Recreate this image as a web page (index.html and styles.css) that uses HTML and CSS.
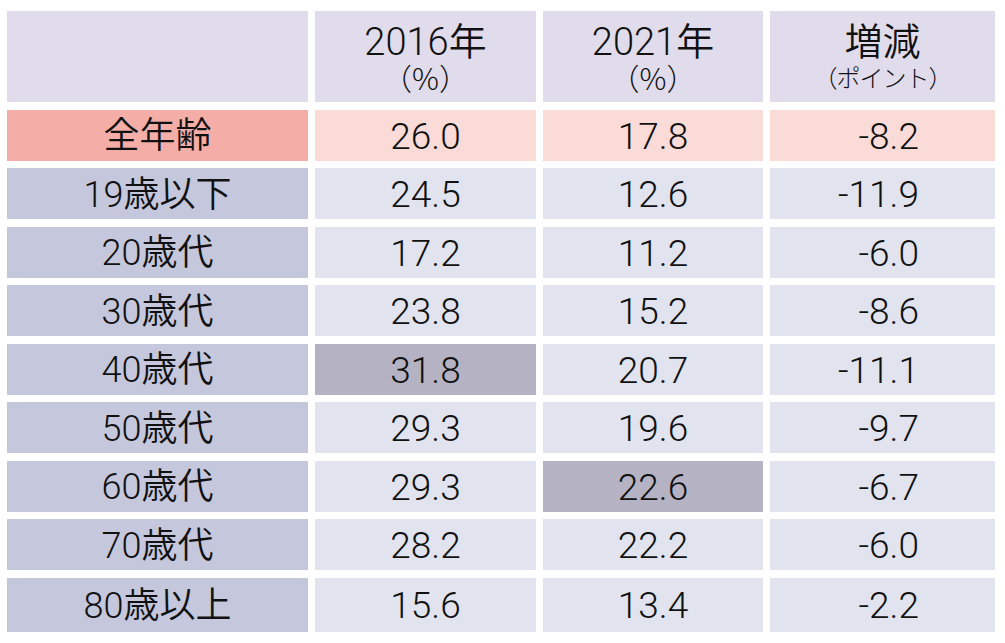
FILE: index.html
```html
<!DOCTYPE html>
<html lang="ja">
<head>
<meta charset="utf-8">
<title>年代別</title>
<link rel="stylesheet" href="styles.css">
</head>
<body>
<div class="table">
  <div class="cell head"></div>
  <div class="cell head"><span class="year">2016年</span><span class="unit">（%）</span></div>
  <div class="cell head"><span class="year">2021年</span><span class="unit">（%）</span></div>
  <div class="cell head"><span class="year">増減</span><span class="unit small">（ポイント）</span></div>

  <div class="cell label all">全年齢</div>
  <div class="cell num all">26.0</div>
  <div class="cell num all">17.8</div>
  <div class="cell num diff all">-8.2</div>

  <div class="cell label">19歳以下</div>
  <div class="cell num">24.5</div>
  <div class="cell num">12.6</div>
  <div class="cell num diff">-11.9</div>

  <div class="cell label">20歳代</div>
  <div class="cell num">17.2</div>
  <div class="cell num">11.2</div>
  <div class="cell num diff">-6.0</div>

  <div class="cell label">30歳代</div>
  <div class="cell num">23.8</div>
  <div class="cell num">15.2</div>
  <div class="cell num diff">-8.6</div>

  <div class="cell label">40歳代</div>
  <div class="cell num max">31.8</div>
  <div class="cell num">20.7</div>
  <div class="cell num diff">-11.1</div>

  <div class="cell label">50歳代</div>
  <div class="cell num">29.3</div>
  <div class="cell num">19.6</div>
  <div class="cell num diff">-9.7</div>

  <div class="cell label">60歳代</div>
  <div class="cell num">29.3</div>
  <div class="cell num max">22.6</div>
  <div class="cell num diff">-6.7</div>

  <div class="cell label">70歳代</div>
  <div class="cell num">28.2</div>
  <div class="cell num">22.2</div>
  <div class="cell num diff">-6.0</div>

  <div class="cell label">80歳以上</div>
  <div class="cell num">15.6</div>
  <div class="cell num">13.4</div>
  <div class="cell num diff">-2.2</div>
</div>
</body>
</html>
```
FILE: styles.css
```css
html, body {
  margin: 0;
  padding: 0;
  background: #ffffff;
}
body {
  font-family: "Roboto", "Noto Sans CJK JP", sans-serif;
  color: #111111;
}
.table {
  display: grid;
  grid-template-columns: 301px 221px 220px 225px;
  grid-template-rows: 91px repeat(8, 51px) 54px;
  column-gap: 7px;
  row-gap: 7.5px;
  padding: 11px 0 0 7px;
}
.cell {
  display: flex;
  align-items: center;
  justify-content: center;
  background: #e1e3ef;
  font-size: 36px;
  line-height: 1;
}
.head {
  background: #e0dcec;
  flex-direction: column;
  gap: 0;
  padding-top: 2px;
}
.year {
  font-family: "Roboto", "Noto Sans CJK JP", sans-serif;
  font-weight: 350;
  font-size: 38px;
  line-height: 38px;
}
.unit {
  font-family: "Noto Sans CJK JP", sans-serif;
  font-weight: 300;
  font-size: 30px;
  line-height: 32px;
}
.unit.small {
  font-size: 24px;
  letter-spacing: -1px;
}
.label {
  background: #c5c7dc;
  font-family: "Roboto", "Noto Sans CJK JP", sans-serif;
  font-weight: 350;
  font-size: 36px;
  padding-top: 2px;
}
.label.all {
  background: #f5aea7;
}
.num {
  font-family: "Roboto", "Liberation Sans", sans-serif;
  font-weight: 300;
  font-size: 37px;
  padding-top: 2px;
}
.num.all {
  background: #fadbd7;
}
.num.max {
  background: #b5b3c3;
}
.diff {
  justify-content: flex-end;
  padding-right: 76px;
}
```
